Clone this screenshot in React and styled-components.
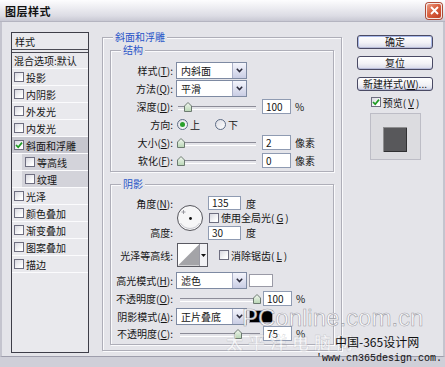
import React from 'react';
import styled, { createGlobalStyle, css } from 'styled-components';

const Global = createGlobalStyle`
  html, body { margin: 0; padding: 0; background: #e4e4e9; }
  body {
    font-family: "Noto Sans CJK SC", "Liberation Sans", sans-serif;
    font-size: 10px;
    color: #151515;
  }
  * { box-sizing: border-box; }
  u { text-decoration: underline; text-underline-offset: 1px; }
`;

const Window = styled.div`
  position: relative;
  width: 445px;
  height: 367px;
  overflow: hidden;
  background: #cfcfd8;
  display: flex;
  flex-direction: column;
`;

const TitleBar = styled.div`
  height: 22px;
  flex: none;
  display: flex;
  align-items: center;
  justify-content: space-between;
  padding: 0 3px 0 5px;
  background: linear-gradient(to bottom, #fdfdfe 0%, #f0f0f4 30%, #dcdce4 75%, #c8c8d3 100%);
  border-bottom: 1px solid #b4b4c0;
`;

const Title = styled.span`
  font-size: 11px;
  font-weight: 700;
  color: #111;
  letter-spacing: 0.5px;
`;

const CloseBtn = styled.div`
  width: 16px;
  height: 16px;
  border-radius: 3px;
  border: 1px solid #f4e8e4;
  background: linear-gradient(135deg, #ec9c84 0%, #d9603f 45%, #c13d22 100%);
  display: flex;
  align-items: center;
  justify-content: center;
  box-shadow: 0 0 0 1px #b04a36;
`;

const Body = styled.div`
  height: 335px;
  flex: none;
  display: flex;
  align-items: flex-start;
  padding: 10px 0 0 9px;
  background: #e4e4e9;
  border-left: 2px solid #c4c4ce;
  border-right: 2px solid #c4c4ce;
  border-bottom: 1px solid #9e9eac;
`;

/* ---------- left list ---------- */

const StyleList = styled.div`
  width: 78px;
  height: 321px;
  flex: none;
  border: 1px solid #3e3e48;
  background: #e9e9ed;
  display: flex;
  flex-direction: column;
`;

const ListHeader = styled.div`
  height: 20px;
  padding-left: 3px;
  display: flex;
  align-items: center;
  border-bottom: 4px double #4a4a54;
`;

const ListItem = styled.div`
  height: ${p => p.$h || 17}px;
  flex: none;
  display: flex;
  align-items: center;
  gap: 2px;
  padding-left: ${p => (p.$sub ? 13 : 2)}px;
  border-bottom: 1px solid #fbfbfd;
  ${p => p.$selected && css`background: #c6c6ce;`}
  ${p => p.$sub && css`background: linear-gradient(to right, transparent 10px, #d3d3da 10px);`}
`;

const CheckBoxBox = styled.span`
  width: 10px;
  height: 10px;
  flex: none;
  display: inline-flex;
  align-items: center;
  justify-content: center;
  border: 1px solid #6e6e80;
  background: linear-gradient(135deg, #d8d8e0 0%, #ffffff 80%);
`;

const CheckBox = ({ checked }) => (
  <CheckBoxBox>
    {checked && (
      <svg width="8" height="8" viewBox="0 0 8 8">
        <path d="M1 4 L3.2 6.2 L7 1.6" stroke="#1e9b22" strokeWidth="1.7" fill="none" />
      </svg>
    )}
  </CheckBoxBox>
);

/* ---------- group boxes ---------- */

const Group = styled.div`
  position: relative;
  flex: none;
  width: ${p => p.$w}px;
  height: ${p => p.$h}px;
  margin-top: ${p => p.$mt || 0}px;
  border: 1px solid #aeaeb8;
  box-shadow: inset 1px 1px 0 #fafafc, 1px 1px 0 #fafafc;
  padding: ${p => p.$pad};
  display: flex;
  flex-direction: column;
`;

const Legend = styled.span`
  position: absolute;
  top: -8px;
  left: 10px;
  padding: 0 2px;
  background: #e4e4e9;
  color: #2855c8;
  font-size: 10px;
  line-height: 14px;
`;

const MainGroup = styled(Group)`
  margin-left: 13px;
`;

/* ---------- rows ---------- */

const Row = styled.div`
  height: ${p => p.$h || 18}px;
  flex: none;
  display: grid;
  grid-template-columns: 62px 1fr;
  column-gap: 3px;
  align-items: center;
  margin-top: ${p => p.$mt || 0}px;
`;

const Label = styled.span`
  text-align: right;
  white-space: nowrap;
`;

const Controls = styled.div`
  display: flex;
  align-items: center;
`;

const SelectBox = styled.div`
  width: 71px;
  height: 17px;
  flex: none;
  display: flex;
  border: 1px solid #7e8aa2;
  background: #fff;
`;

const SelectText = styled.span`
  flex: 1;
  padding-left: 4px;
  line-height: 15px;
`;

const DropBtn = styled.span`
  width: 14px;
  flex: none;
  display: flex;
  align-items: center;
  justify-content: center;
  border-left: 1px solid #aab0c8;
  background: linear-gradient(to bottom, #f4f5fc, #c9cde4);
`;

const Select = ({ value }) => (
  <SelectBox>
    <SelectText>{value}</SelectText>
    <DropBtn>
      <svg width="7" height="5" viewBox="0 0 7 5">
        <path d="M0.8 0.8 L3.5 3.6 L6.2 0.8" stroke="#2a2a3a" strokeWidth="1.5" fill="none" />
      </svg>
    </DropBtn>
  </SelectBox>
);

const Track = styled.div`
  position: relative;
  flex: none;
  width: ${p => p.$w}px;
  height: 11px;
  margin-left: ${p => p.$ml}px;
  margin-right: ${p => p.$mr}px;
  &::before {
    content: '';
    position: absolute;
    left: 0;
    right: 0;
    top: 5px;
    height: 2px;
    border-top: 1px solid #8c8c98;
    border-bottom: 1px solid #ffffff;
  }
`;

const Thumb = styled.svg`
  position: absolute;
  top: 1px;
`;

const Slider = ({ w, ml, mr, x }) => (
  <Track $w={w} $ml={ml} $mr={mr}>
    <Thumb width="8" height="10" viewBox="0 0 8 10" style={{ left: x - 4 }}>
      <defs>
        <linearGradient id="tg" x1="0" y1="0" x2="0" y2="1">
          <stop offset="0" stopColor="#f4f8f2" />
          <stop offset="1" stopColor="#b8d6b4" />
        </linearGradient>
      </defs>
      <path d="M0.5 4 L4 0.5 L7.5 4 L7.5 9.5 L0.5 9.5 Z" fill="url(#tg)" stroke="#6c7a70" strokeWidth="1" />
    </Thumb>
  </Track>
);

const NumBox = styled.div`
  width: ${p => p.$w || 29}px;
  height: ${p => p.$h || 15}px;
  flex: none;
  background: #fff;
  border: 1px solid #8f9bb2;
  padding-left: 3px;
  line-height: ${p => (p.$h || 15) - 2}px;
`;

const Unit = styled.span`
  margin-left: ${p => p.$ml || 4}px;
  white-space: nowrap;
`;

const RadioCircle = styled.span`
  width: 11px;
  height: 11px;
  flex: none;
  border-radius: 50%;
  border: 1px solid #5d6c86;
  background: linear-gradient(135deg, #dcdce4, #fff);
  display: inline-flex;
  align-items: center;
  justify-content: center;
  margin-left: ${p => p.$ml || 0}px;
  margin-right: 2px;
  &::after {
    content: '';
    width: 5px;
    height: 5px;
    border-radius: 50%;
    background: ${p => (p.$on ? '#2aa02c' : 'transparent')};
  }
`;

const CheckLabel = styled.span`
  display: inline-flex;
  align-items: center;
  gap: 2px;
  margin-left: ${p => p.$ml || 0}px;
  white-space: nowrap;
`;

/* angle block */
const AngleBlock = styled.div`
  height: 44px;
  flex: none;
  display: grid;
  grid-template-columns: 62px 31px auto;
  grid-template-rows: 14px 15px 15px;
  column-gap: 2px;
  align-items: center;
`;

const AngleDial = styled.svg`
  grid-column: 2;
  grid-row: 1 / span 3;
  margin-left: 1px;
`;

const Cell = styled.div`
  grid-column: ${p => p.$c};
  grid-row: ${p => p.$r};
  display: flex;
  align-items: center;
  justify-content: ${p => (p.$right ? 'flex-end' : 'flex-start')};
  padding-left: ${p => p.$pl || 0}px;
  white-space: nowrap;
`;

const ContourBox = styled.div`
  width: 31px;
  height: 24px;
  flex: none;
  margin-left: 1px;
  display: flex;
  border: 1px solid #5a5a62;
  background: #fff;
`;

const ContourArrow = styled.span`
  width: 8px;
  flex: none;
  border-left: 1px solid #9a9aa4;
  background: #f2f2f5;
  display: flex;
  align-items: center;
  justify-content: center;
`;

const Swatch = styled.span`
  width: 24px;
  height: 13px;
  flex: none;
  margin-left: 2px;
  border: 1px solid #9a9aa6;
  background: ${p => p.$color};
`;

/* ---------- right side ---------- */

const Side = styled.div`
  width: 76px;
  flex: none;
  margin-left: 15px;
  margin-top: 3px;
  display: flex;
  flex-direction: column;
  align-items: stretch;
  gap: 7px;
`;

const Button = styled.div`
  height: 14px;
  border-radius: 3px;
  border: 1px solid #4a4a64;
  background: linear-gradient(to bottom, #ffffff 0%, #f2f2f6 55%, #d6d8e8 100%);
  box-shadow: inset 0 -1px 0 #b8bcd8 ${p => (p.$default ? ', inset 0 0 0 1px #a8b8e8' : '')};
  display: flex;
  align-items: center;
  justify-content: center;
  font-size: 10px;
  line-height: 1;
  white-space: nowrap;
`;

const PreviewCheck = styled.div`
  height: 12px;
  margin-top: -2px;
  display: flex;
  align-items: center;
  justify-content: center;
  gap: 2px;
`;

const PreviewPane = styled.div`
  width: 51px;
  height: 47px;
  align-self: center;
  margin-top: -2px;
  background: #dcdce0;
  border: 1px solid #bdbdc6;
  display: flex;
  align-items: center;
  justify-content: center;
  padding-top: 5px;
`;

const PreviewSquare = styled.div`
  width: 24px;
  height: 25px;
  background: #58585b;
  box-shadow: inset 1px 1px 0 #8e8e90, inset -1px -1px 0 #303032;
`;

/* ---------- watermark overlay ---------- */

const Watermark = styled.div`
  position: absolute;
  left: ${p => p.$x}px;
  top: ${p => p.$y}px;
  white-space: nowrap;
  pointer-events: none;
`;

const WmBrand = styled.span`
  font-family: "Liberation Sans", sans-serif;
  font-size: 24px;
  line-height: 24px;
  color: rgba(255, 255, 255, 0.9);
  -webkit-text-stroke: 0.6px rgba(130, 130, 140, 0.75);
`;

const WmChinese = styled.span`
  font-family: "Noto Sans CJK SC", sans-serif;
  font-size: 17px;
  font-weight: 700;
  letter-spacing: 5px;
  color: rgba(255, 255, 255, 0.6);
  -webkit-text-stroke: 0.4px rgba(140, 140, 150, 0.45);
`;

const WmSite = styled.span`
  font-family: "Noto Sans CJK SC", sans-serif;
  font-size: 12px;
  color: #111;
`;

const WmUrl = styled.span`
  font-family: "Liberation Mono", monospace;
  font-size: 10px;
  color: #111;
`;

const listItems = [
  { t: '投影' },
  { t: '内阴影' },
  { t: '外发光' },
  { t: '内发光' },
  { t: '斜面和浮雕', checked: true, selected: true },
  { t: '等高线', sub: true },
  { t: '纹理', sub: true },
  { t: '光泽' },
  { t: '颜色叠加' },
  { t: '渐变叠加' },
  { t: '图案叠加' },
  { t: '描边' },
];

export default function App() {
  return (
    <>
      <Global />
      <Window>
        <TitleBar>
          <Title>图层样式</Title>
          <CloseBtn>
            <svg width="9" height="9" viewBox="0 0 9 9">
              <path d="M1 1 L8 8 M8 1 L1 8" stroke="#fff" strokeWidth="1.8" />
            </svg>
          </CloseBtn>
        </TitleBar>

        <Body>
          <StyleList>
            <ListHeader>样式</ListHeader>
            <ListItem $h={16}>混合选项:默认</ListItem>
            {listItems.map(it => (
              <ListItem key={it.t} $sub={it.sub} $selected={it.selected}>
                <CheckBox checked={it.checked} />
                {it.t}
              </ListItem>
            ))}
          </StyleList>

          <MainGroup $w={240} $h={314} $mt={5} $pad="12px 7px 5px 7px">
            <Legend>斜面和浮雕</Legend>

            <Group $w={224} $h={122} $pad="10px 0 2px 0">
              <Legend>结构</Legend>
              <Row>
                <Label>样式(<u>T</u>):</Label>
                <Controls><Select value="内斜面" /></Controls>
              </Row>
              <Row>
                <Label>方法(<u>Q</u>):</Label>
                <Controls><Select value="平滑" /></Controls>
              </Row>
              <Row>
                <Label>深度(<u>D</u>):</Label>
                <Controls>
                  <Slider w={78} ml={2} mr={6} x={10} />
                  <NumBox>100</NumBox>
                  <Unit>%</Unit>
                </Controls>
              </Row>
              <Row>
                <Label>方向:</Label>
                <Controls>
                  <RadioCircle $on $ml={1} />上
                  <RadioCircle $ml={15} />下
                </Controls>
              </Row>
              <Row>
                <Label>大小(<u>S</u>):</Label>
                <Controls>
                  <Slider w={78} ml={2} mr={6} x={3} />
                  <NumBox>2</NumBox>
                  <Unit>像素</Unit>
                </Controls>
              </Row>
              <Row>
                <Label>软化(<u>F</u>):</Label>
                <Controls>
                  <Slider w={78} ml={2} mr={6} x={3} />
                  <NumBox>0</NumBox>
                  <Unit>像素</Unit>
                </Controls>
              </Row>
            </Group>

            <Group $w={224} $h={161} $mt={12} $pad="11px 0 3px 0">
              <Legend>阴影</Legend>
              <AngleBlock>
                <Cell $c={1} $r={1} $right>角度(<u>N</u>):</Cell>
                <AngleDial width="28" height="28" viewBox="0 0 28 28">
                  <circle cx="14" cy="14" r="12.5" fill="#f6f6f7" stroke="#55555c" strokeWidth="1" />
                  <path d="M4.5 19 A11 11 0 0 0 23.5 19" stroke="#c8c8cf" strokeWidth="1" fill="none" />
                  <circle cx="14.5" cy="14.5" r="1.4" fill="#111" />
                  <path d="M7.5 6 V10 M5.5 8 H9.5" stroke="#8a8a92" strokeWidth="0.8" />
                </AngleDial>
                <Cell $c={3} $r={1}><NumBox $w={33} $h={14}>135</NumBox><Unit $ml={5}>度</Unit></Cell>
                <Cell $c={3} $r={2} $pl={1}>
                  <CheckLabel><CheckBox />使用全局光(<u>G</u>)</CheckLabel>
                </Cell>
                <Cell $c={1} $r={3} $right>高度:</Cell>
                <Cell $c={3} $r={3}><NumBox $w={33} $h={14}>30</NumBox><Unit $ml={5}>度</Unit></Cell>
              </AngleBlock>

              <Row $h={24} $mt={3}>
                <Label>光泽等高线:</Label>
                <Controls>
                  <ContourBox>
                    <svg width="22" height="22" viewBox="0 0 22 22">
                      <rect width="22" height="22" fill="#fff" />
                      <polygon points="0,22 22,0 22,22" fill="#a4a4a8" />
                    </svg>
                    <ContourArrow>
                      <svg width="5" height="3" viewBox="0 0 5 3"><polygon points="0,0 5,0 2.5,3" fill="#111" /></svg>
                    </ContourArrow>
                  </ContourBox>
                  <CheckLabel $ml={11}><CheckBox />消除锯齿(<u>L</u>)</CheckLabel>
                </Controls>
              </Row>

              <Row $mt={4}>
                <Label>高光模式(<u>H</u>):</Label>
                <Controls><Select value="滤色" /><Swatch $color="#ffffff" /></Controls>
              </Row>
              <Row>
                <Label>不透明度(<u>O</u>):</Label>
                <Controls>
                  <Slider w={80} ml={4} mr={3} x={77} />
                  <NumBox>100</NumBox>
                  <Unit>%</Unit>
                </Controls>
              </Row>
              <Row>
                <Label>阴影模式(<u>A</u>):</Label>
                <Controls><Select value="正片叠底" /><Swatch $color="#000000" /></Controls>
              </Row>
              <Row $h={16}>
                <Label>不透明度(<u>C</u>):</Label>
                <Controls>
                  <Slider w={80} ml={4} mr={3} x={58} />
                  <NumBox>75</NumBox>
                  <Unit>%</Unit>
                </Controls>
              </Row>
            </Group>
          </MainGroup>

          <Side>
            <Button $default>确定</Button>
            <Button>复位</Button>
            <Button>新建样式(<u>W</u>)...</Button>
            <PreviewCheck><CheckBox checked />预览(<u>V</u>)</PreviewCheck>
            <PreviewPane><PreviewSquare /></PreviewPane>
          </Side>
        </Body>

        <Watermark $x={242} $y={306}><WmBrand>PConline.com.cn</WmBrand></Watermark>
        <Watermark $x={226} $y={329}><WmChinese>太平洋电脑网</WmChinese></Watermark>
        <Watermark $x={335} $y={333}><WmSite>中国-365设计网</WmSite></Watermark>
        <Watermark $x={316} $y={349}><WmUrl>'www.cn365design.com.</WmUrl></Watermark>
      </Window>
    </>
  );
}
